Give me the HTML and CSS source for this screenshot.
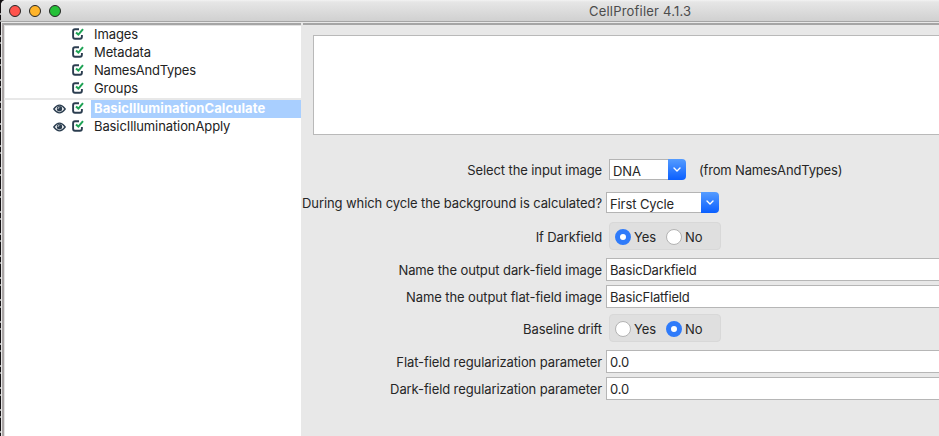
FILE: index.html
```html
<!DOCTYPE html>
<html lang="en">
<head>
<meta charset="utf-8">
<title>CellProfiler 4.1.3</title>
<link rel="stylesheet" href="styles.css">
</head>
<body>
<svg class="defs" width="0" height="0" aria-hidden="true">
  <symbol id="check" viewBox="0 0 12 12">
    <path d="M7 1.3H3Q1.1 1.3 1.1 3.2V8.8Q1.1 10.7 3 10.7H8Q9.9 10.7 9.9 8.8V7" fill="none" stroke="#2c3e50" stroke-width="1.9"/>
    <path d="M4 4.4L6.4 6.6L11 1.2" fill="none" stroke="#1fa355" stroke-width="2"/>
  </symbol>
  <symbol id="eye" viewBox="0 0 13 10">
    <path d="M.8 5Q6.5-2.6 12.2 5Q6.5 12.6 .8 5Z" fill="#fff" stroke="#2c3e50" stroke-width="1.3"/>
    <circle cx="6.5" cy="4.7" r="2.7" fill="#2c3e50"/>
    <path d="M5 4.8Q5 3.4 6.5 3.2" fill="none" stroke="#fff" stroke-width=".8"/>
  </symbol>
  <symbol id="chevron" viewBox="0 0 8 5">
    <path d="M1 1L4 4L7 1" fill="none" stroke="#fff" stroke-width="1.4" stroke-linecap="round" stroke-linejoin="round"/>
  </symbol>
</svg>
<div class="desktop">
  <div class="window">
    <header class="titlebar">
      <div class="lights"><i class="red"></i><i class="amber"></i><i class="green"></i></div>
      <h1>CellProfiler 4.1.3</h1>
    </header>
    <div class="content">
      <nav class="modules">
        <div class="module"><svg class="check"><use href="#check"/></svg><span class="name">Images</span></div>
        <div class="module"><svg class="check"><use href="#check"/></svg><span class="name">Metadata</span></div>
        <div class="module"><svg class="check"><use href="#check"/></svg><span class="name tight">NamesAndTypes</span></div>
        <div class="module"><svg class="check"><use href="#check"/></svg><span class="name">Groups</span></div>
        <div class="divider"></div>
        <div class="module"><svg class="eye"><use href="#eye"/></svg><svg class="check"><use href="#check"/></svg><span class="name selected">BasicIlluminationCalculate</span></div>
        <div class="module"><svg class="eye"><use href="#eye"/></svg><svg class="check"><use href="#check"/></svg><span class="name">BasicIlluminationApply</span></div>
      </nav>
      <main class="settings">
        <div class="notes"></div>
        <div class="form">
          <div class="row combo-row"><label>Select the input image</label><div class="combo inset dna"><span>DNA</span><b><svg><use href="#chevron"/></svg></b></div><span class="source">(from NamesAndTypes)</span></div>
          <div class="row combo-row"><label>During which cycle the background is calculated?</label><div class="combo first"><span>First Cycle</span><b><svg><use href="#chevron"/></svg></b></div></div>
          <div class="row radio-row"><label>If Darkfield</label><div class="radios inset"><i class="on"></i><span>Yes</span><i></i><span>No</span></div></div>
          <div class="row"><label>Name the output dark-field image</label><div class="field">BasicDarkfield</div></div>
          <div class="row"><label>Name the output flat-field image</label><div class="field">BasicFlatfield</div></div>
          <div class="row radio-row second"><label>Baseline drift</label><div class="radios inset"><i></i><span>Yes</span><i class="on"></i><span>No</span></div></div>
          <div class="row"><label>Flat-field regularization parameter</label><div class="field">0.0</div></div>
          <div class="row"><label>Dark-field regularization parameter</label><div class="field">0.0</div></div>
        </div>
      </main>
    </div>
  </div>
</div>
</body>
</html>
```
FILE: styles.css
```css
* { box-sizing: border-box; }
body { margin: 0; font: 13px/18px Inter, "Liberation Sans", sans-serif; letter-spacing: -.1px; color: #262626; overflow: hidden; }
.defs { position: absolute; }
svg { display: block; flex: none; }
.desktop { height: 436px; padding-left: 1px; background: repeating-linear-gradient(#151214 0 13px, #aaa 13px 15px, #151214 15px 20px, #999 20px 22px); }
.window { height: 436px; display: flex; flex-direction: column; background: #e8e8e8; border-radius: 5px 0 0 0; }
.titlebar { height: 22px; flex: none; display: grid; grid-template-columns: 588px 1fr; align-items: center; background: linear-gradient(#f3f3f3 0, #e6e6e6 2px, #d0d0d0 100%); border-bottom: 1px solid #a5a5a5; border-radius: 5px 0 0 0; }
.titlebar h1 { margin: 1px 0 0; font-size: 13px; font-weight: 400; color: #4c4c4c; line-height: 18px; letter-spacing: .2px; }
.lights { display: flex; gap: 8px; padding: 1px 0 0 8px; }
.lights i { width: 12px; height: 12px; border-radius: 50%; border: 1px solid; }
.red { background: #ff544d; border-color: #e2453f; }
.amber { background: #ffb429; border-color: #dd9a20; }
.green { background: #25c138; border-color: #1ba72c; }
.content { flex: 1; display: flex; margin-top: 1px; min-height: 0; }
.modules { width: 299px; margin-left: 1px; border-left: 2px solid #a9a4a4; border-top: 2px solid #a5a5a5; background: #fff; box-shadow: inset 1px 1px #e2e2e2; padding-top: 1px; }
.module { display: flex; align-items: center; height: 18px; padding-left: 50px; }
.eye { width: 13px; height: 10px; margin: 0 5px 1px -1px; }
.eye + .check { margin-left: 1px; }
.check { width: 12px; height: 12px; margin-bottom: 2px; }
.module .check:first-child { margin-left: 18px; }
.name { flex: 1; height: 18px; margin-left: 7px; padding-left: 3px; line-height: 16px; color: #222; }
.tight { letter-spacing: -.23px; }
.selected { background: #a9cfff; color: #fff; font-weight: 700; line-height: 17px; letter-spacing: .1px; }
.divider { height: 2px; background: #e8e8e8; }
.settings { flex: 1; min-width: 0; margin-left: 2px; border-top: 2px solid #a5a5a5; }
.notes { height: 100px; margin: 10px 0 0 10px; border: 1px solid #b9b9b9; border-right: 0; background: #fff; }
.form { display: flex; flex-direction: column; padding-top: 24px; }
.row { display: flex; align-items: center; height: 23px; margin-bottom: 4px; }
.row label { width: 299px; margin-right: 4px; display: flex; justify-content: flex-end; white-space: nowrap; flex: none; }
.combo-row { height: 21px; margin-bottom: 12px; }
.combo-row + .radio-row { margin-top: -3px; }
.radio-row { height: 28px; margin-bottom: 8px; }
.radio-row.second { margin-top: 2px; }
.radio-row label { padding-top: 2px; }
.inset { margin-left: 3px; }
.combo { display: flex; height: 21px; }
.combo span { flex: 1; border: 1px solid #b4b4b4; border-right: 0; background: #fff; padding: 2px 0 0 3px; line-height: 18px; }
.combo b { width: 18px; display: grid; place-items: center; border-radius: 0 4px 4px 0; background: linear-gradient(#559cff, #0a5fff); }
.combo b svg { width: 8px; height: 5px; }
.dna { width: 77px; }
.first { width: 113px; }
.source { margin-left: 13px; letter-spacing: -.17px; }
.radios { display: flex; align-items: center; width: 112px; height: 28px; padding: 2px 0 0 5px; background: #dfdfdf; border: 1px solid #d8d8d8; border-radius: 4px; }
.radios i { width: 16px; height: 16px; border-radius: 50%; border: 1px solid #b3b3b3; background: #fff; flex: none; }
.radios .on { border: 5px solid #2f7bfa; }
.radios span { width: 35px; padding-left: 3px; }
.field { flex: 1; height: 23px; padding-left: 3px; border: 1px solid #b6b6b6; border-right: 0; background: #fff; line-height: 22px; letter-spacing: -.17px; }
```
